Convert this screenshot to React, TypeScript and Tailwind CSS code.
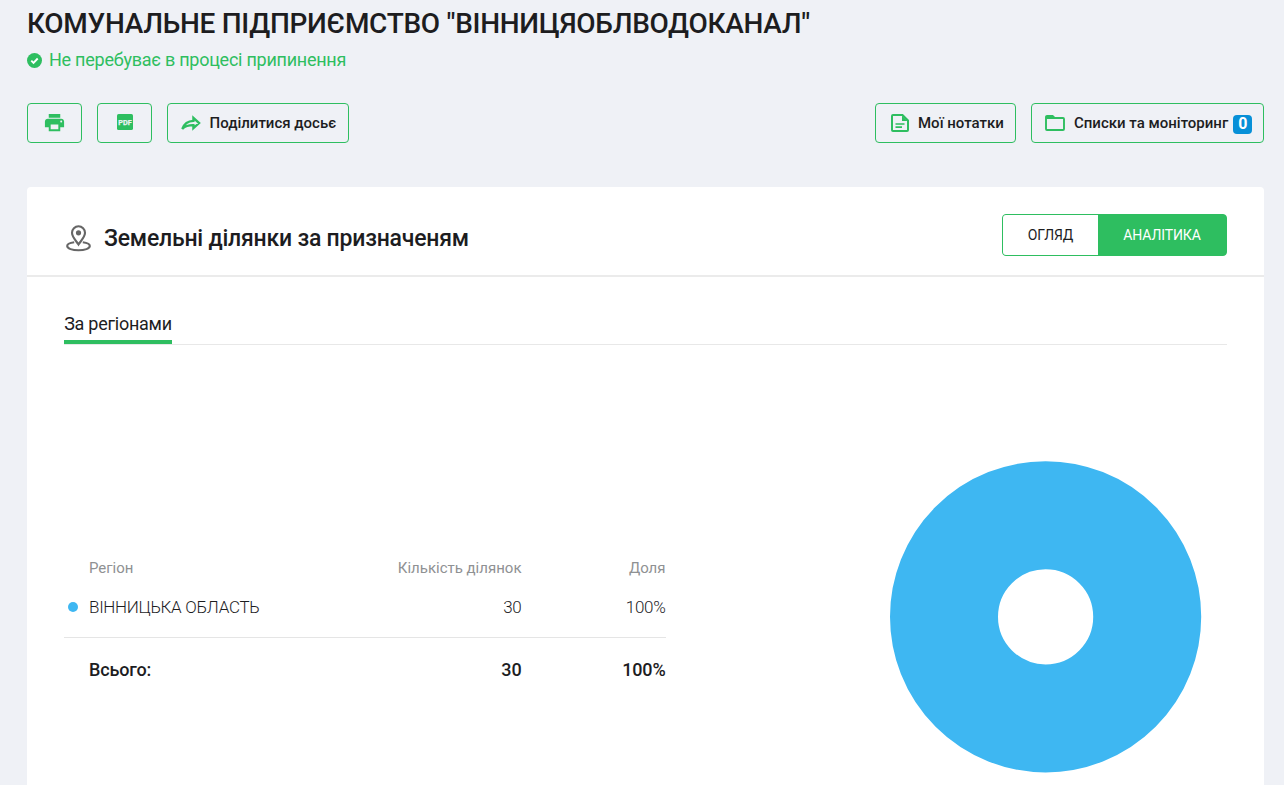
import { useState } from 'react';
import { MdPrint } from 'react-icons/md';

const rows = [{ id: 1, region: 'ВІННИЦЬКА ОБЛАСТЬ', count: 30, share: '100%', color: '#3eb7f2' }];

const outlineButton =
  'flex h-10 items-center rounded-[4px] border border-[#2ebe60] text-[15px] font-medium text-[#1d1d1f]';

function CheckIcon() {
  return (
    <svg className="mt-px size-[15px]" viewBox="0 0 15 15" fill="none">
      <circle cx="7.5" cy="7.5" r="7.5" fill="#2ebe60" />
      <path d="M4.3 7.6l2.2 2.2 4.2-4.3" stroke="#fff" strokeWidth="1.9" />
    </svg>
  );
}

function PdfIcon() {
  return (
    <svg className="mb-[2px] size-4" viewBox="0 0 16 16">
      <rect width="16" height="16" rx="1.6" fill="#2ebe60" />
      <text
        x="8"
        y="10.9"
        textAnchor="middle"
        textLength="13.4"
        lengthAdjust="spacingAndGlyphs"
        fill="#eff1f6"
        stroke="#eff1f6"
        strokeWidth="0.25"
        className="font-[Roboto] text-[7.6px] font-bold"
      >
        PDF
      </text>
    </svg>
  );
}

function ShareIcon() {
  return (
    <svg className="h-[17px] w-[21px]" viewBox="0 0 21 17" fill="none">
      <path
        d="M12.400 2.900v2.900C7 6 3.100 8.900 1.300 13.800 4.500 11 7.900 10.100 12.400 10.200v3l5.700-5.100z"
        stroke="#2ebe60"
        strokeWidth="2.3"
      />
    </svg>
  );
}

function NoteIcon() {
  return (
    <svg className="h-[18px] w-[18px]" viewBox="0 0 18 18" fill="none" stroke="#2ebe60" strokeWidth="2">
      <path d="M2 1h9.500L17 6.500V16a1 1 0 0 1-1 1H2a1 1 0 0 1-1-1V2a1 1 0 0 1 1-1z" />
      <path d="M11 1.500V7h5.500z" fill="#2ebe60" stroke="none" />
      <path d="M4.500 10h9M4.500 13.200h6.500" strokeWidth="1.700" />
    </svg>
  );
}

function FolderIcon() {
  return (
    <svg className="h-4 w-5" viewBox="0 0 20 16" fill="none">
      <path d="M2 3h16a1 1 0 0 1 1 1v10a1 1 0 0 1-1 1H2a1 1 0 0 1-1-1V2a1 1 0 0 1 1-1h5.600l2 2" stroke="#2ebe60" strokeWidth="1.900" />
      <path d="M1 1h6.600l2 2.500H1z" fill="#2ebe60" />
    </svg>
  );
}

function PlotIcon() {
  return (
    <svg className="h-[27px] w-[25px]" viewBox="0 0 25 27" fill="none" stroke="#666" strokeWidth="2.1">
      <path d="M12.500 19.500C10 15.700 6 12 6 7.800a6.500 6.500 0 0 1 13 0c0 4.200-4 7.900-6.500 11.700z" />
      <circle cx="12.500" cy="7.800" r="2.600" fill="#666" stroke="none" />
      <path d="M8.200 17.300C4 17.800 1.200 19.300 1.200 21.100c0 2.500 5 4.200 11.300 4.200s11.300-1.700 11.300-4.200c0-1.800-2.800-3.300-7-3.800" />
    </svg>
  );
}

export default function App() {
  const [view, setView] = useState('analytics');
  const tabStyle = (active: boolean) => (active ? 'bg-[#2ebe60] text-white' : 'bg-white text-[#1d1d1f]');

  return (
    <div className="flex h-[785px] flex-col overflow-hidden bg-[#eff1f6] pr-5 pl-[27px] font-[Roboto,sans-serif] text-[#1d1d1f]">
      <header>
        <h1 className="mt-[6px] h-9 text-[28px] leading-9 font-medium tracking-[-0.29px] whitespace-nowrap">
          КОМУНАЛЬНЕ ПІДПРИЄМСТВО "ВІННИЦЯОБЛВОДОКАНАЛ"
        </h1>
        <div className="mt-[6px] flex h-6 items-center gap-[7px] text-lg tracking-[-0.25px] text-[#2ebe60]">
          <CheckIcon />
          <span>Не перебуває в процесі припинення</span>
        </div>
        <div className="mt-[31px] flex justify-between">
          <div className="flex gap-[15px]">
            <button aria-label="Друк" className={`${outlineButton} w-[55px] justify-center`}>
              <MdPrint className="mb-px size-[23px] text-[#2ebe60]" />
            </button>
            <button aria-label="PDF" className={`${outlineButton} w-[55px] justify-center`}>
              <PdfIcon />
            </button>
            <button className={`${outlineButton} w-[182px] gap-[7.5px] pl-[13px]`}>
              <ShareIcon />
              Поділитися досьє
            </button>
          </div>
          <div className="flex gap-[15px]">
            <button className={`${outlineButton} w-[141px] gap-[9px] pl-[15px]`}>
              <NoteIcon />
              Мої нотатки
            </button>
            <button className={`${outlineButton} w-[233px] pl-[13px]`}>
              <FolderIcon />
              <span className="ml-[9px]">Списки та моніторинг</span>
              <span className="mt-[3px] ml-[5px] flex h-[19px] w-[19px] items-center justify-center rounded-[4px] bg-[#0790d8] pb-px text-base leading-[18px] font-bold text-white">
                0
              </span>
            </button>
          </div>
        </div>
      </header>

      <main className="mt-11 flex-1 rounded-t-[4px] bg-white">
        <div className="flex h-[90px] items-start justify-between border-b-2 border-[#ebebeb] pt-[27px] pr-[37px] pl-[39px]">
          <h2 className="flex h-[49px] items-center gap-[13px] text-[23px] font-medium tracking-[-0.22px]">
            <PlotIcon />
            <span className="pt-[2px]">Земельні ділянки за призначеням</span>
          </h2>
          <div className="flex h-[42px] w-[225px] overflow-hidden rounded-[4px] border border-[#2ebe60] bg-[#2ebe60] text-sm">
            <button onClick={() => setView('overview')} className={`w-[95px] tracking-[-0.1px] ${tabStyle(view === 'overview')}`}>
              ОГЛЯД
            </button>
            <button onClick={() => setView('analytics')} className={`flex-1 tracking-[-0.1px] ${tabStyle(view === 'analytics')}`}>
              АНАЛІТИКА
            </button>
          </div>
        </div>

        <div className="px-[37px]">
          <nav className="mt-[33px] flex h-[35px] items-start border-b border-[#e8e8e8]">
            <button className="h-[34px] w-[108px] border-b-4 border-[#2ebe60] pb-0.5 text-lg leading-7 tracking-[-0.25px] whitespace-nowrap">
              За регіонами
            </button>
          </nav>

          <div className="flex items-start justify-between">
            <table className="mt-[203px] w-[601.5px] table-fixed">
              <thead>
                <tr className="h-10 text-[15px] text-[#8f9193]">
                  <th className="w-[300px] pl-[25px] text-left font-normal">Регіон</th>
                  <th className="text-right font-normal">Кількість ділянок</th>
                  <th className="w-36 text-right font-normal">Доля</th>
                </tr>
              </thead>
              <tbody>
                {rows.map((row) => (
                  <tr
                    key={row.id}
                    className="h-[49px] border-b border-[#e5e5e5] align-top text-[17px] leading-[39px] font-light tracking-[-0.3px]"
                  >
                    <td>
                      <span className="flex items-center gap-[11px] pl-1">
                        <span className="mb-px size-[10px] rounded-full" style={{ backgroundColor: row.color }} />
                        {row.region}
                      </span>
                    </td>
                    <td className="text-right">{row.count}</td>
                    <td className="text-right">{row.share}</td>
                  </tr>
                ))}
              </tbody>
              <tfoot>
                <tr className="h-[66px] text-lg font-medium tracking-[-0.15px]">
                  <td className="pl-[25px]">Всього:</td>
                  <td className="text-right">30</td>
                  <td className="text-right">100%</td>
                </tr>
              </tfoot>
            </table>

            <svg className="mt-[116px] mr-[25px] size-[312px]" viewBox="0 0 312 312" fill="none">
              <circle cx="155.6" cy="155.8" r="101.6" stroke="#3eb7f2" strokeWidth="108" />
            </svg>
          </div>
        </div>
      </main>
    </div>
  );
}
